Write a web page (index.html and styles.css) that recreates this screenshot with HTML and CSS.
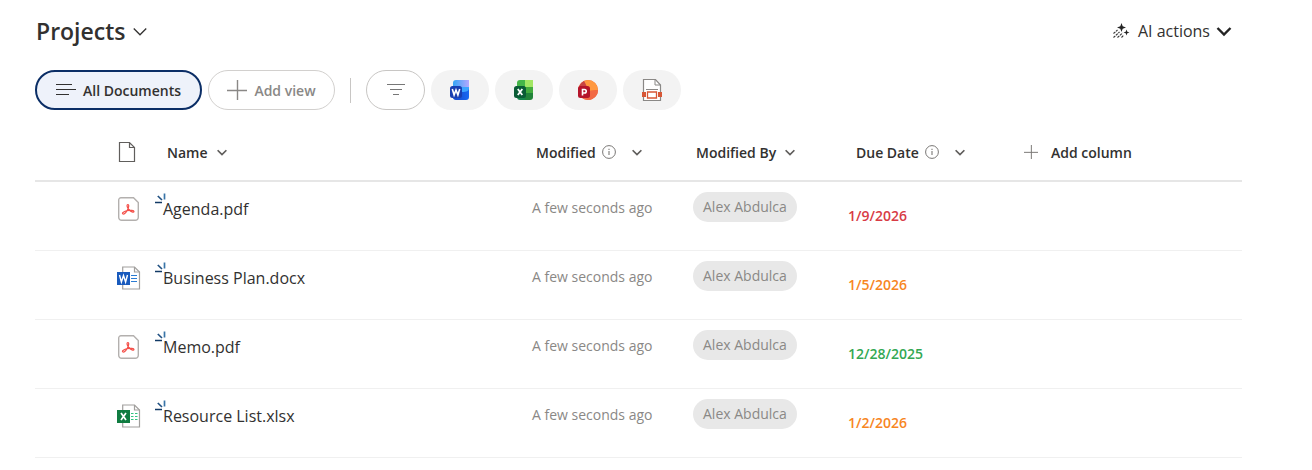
FILE: index.html
```
<!DOCTYPE html>
<html lang="en">
<head>
    <meta charset="UTF-8">
    <meta name="viewport" content="width=device-width, initial-scale=1.0">
    <title>Projects</title>
    <link rel="stylesheet" href="styles.css">
</head>
<body>
    <!-- shared icons -->
    <svg class="sprite" width="0" height="0" aria-hidden="true">
        <symbol id="chevron" viewBox="0 0 16 16"><path d="M3 6l5 5 5-5" fill="none" stroke="currentColor"/></symbol>
        <symbol id="info" viewBox="0 0 14 14">
            <circle cx="7" cy="7" r="6.4" fill="none" stroke="currentColor"/>
            <path d="M7 6v4M7 3.8v1.2" fill="none" stroke="currentColor" stroke-width="1.1"/>
        </symbol>
        <symbol id="plus" viewBox="0 0 20 20"><path d="M10.5 0v20M0 10.5h20" fill="none" stroke="currentColor" stroke-width="1.4"/></symbol>
        <symbol id="new" viewBox="0 0 12 12">
            <path d="M0 9.500h7" stroke="#123a66" stroke-width="1.500"/>
            <path d="M2.800 3l4.200 4" stroke="#205081" stroke-width="1.700"/>
            <path d="M9.500 .5v6" stroke="#3975a8" stroke-width="1.700"/>
        </symbol>
        <symbol id="pdf" viewBox="0 0 24 26">
            <path d="M4 1.700h12.500l4.800 4.800v14.800a3 3 0 0 1-3 3H4.700a3 3 0 0 1-3-3V4a2.300 2.300 0 0 1 2.300-2.300z" fill="#fff" stroke="#b3b0ae" stroke-width="1.400"/>
            <path d="M5.700 17.800c-1-.8 1.200-2.500 4.800-3.200 3.200-.6 6.500-.4 6.500.8 0 1.500-3.400.4-5.300-1.900-1.900-2.200-2.100-5-.8-5 1.500 0 .8 3.500-.9 6.300-1.400 2.500-3.100 3.800-4.300 3z" fill="none" stroke="#f4504a" stroke-width="1.200"/>
        </symbol>
        <symbol id="docx" viewBox="0 0 24 26">
            <path d="M5.700 2h11.800l5 5v17H5.700z" fill="#fff" stroke="#a19f9d" stroke-width="1.200"/>
            <path d="M17.500 2v5h5" fill="none" stroke="#a19f9d" stroke-width="1.200"/>
            <path d="M14 10.500h6M14 13.500h6M14 16.500h6" stroke="#2b7cd3" stroke-width="1.200"/>
            <path d="M0 7h13v13H0z" fill="#185abd"/>
            <path d="M2.500 10l1.900 7 2.100-6.500L8.600 17l1.900-7" fill="none" stroke="#fff" stroke-width="1.400"/>
        </symbol>
        <symbol id="xlsx" viewBox="0 0 24 26">
            <path d="M5.700 2h11.800l5 5v17H5.700z" fill="#fff" stroke="#a19f9d" stroke-width="1.200"/>
            <path d="M17.500 2v5h5" fill="none" stroke="#a19f9d" stroke-width="1.200"/>
            <path d="M14 10.500h2.500M18 10.500h2.500M14 13.500h2.500M18 13.500h2.500M14 16.500h2.500M18 16.500h2.500" stroke="#33c481" stroke-width="1.200"/>
            <path d="M0 7h13v13H0z" fill="#107c41"/>
            <path d="M4 10l5 7M9 10l-5 7" stroke="#fff" stroke-width="1.700"/>
        </symbol>
    </svg>

    <header class="page-header">
        <h1><button class="title-btn">Projects <svg width="20" height="20" aria-hidden="true"><use href="#chevron"/></svg></button></h1>
        <button class="ai-btn">
            <svg width="18" height="18" viewBox="0 0 18 18" aria-hidden="true">
                <path d="M9.500 1l1.200 3.300L14 5.500l-3.300 1.200L9.500 10 8.300 6.700 5 5.500l3.300-1.200zM14.500 7.500l.8 2.200 2.200.8-2.200.8-.8 2.200-.8-2.200-2.200-.8 2.200-.8z" fill="#242424"/>
                <path d="M1.500 11.500L5.500 8M1.500 15.500l6-5.500M5.500 15.500l5-4.500M9.500 15.500l2-2" stroke="#333" stroke-width="1.100" stroke-dasharray="2.500 .8" fill="none"/>
            </svg>
            AI actions
            <svg class="bold-chevron" width="20" height="20" viewBox="0 0 20 20" aria-hidden="true"><path d="M3.500 7l6.500 6.500L16.500 7" fill="none" stroke="#242424" stroke-width="2.400"/></svg>
        </button>
    </header>

    <nav class="views" aria-label="Views">
        <button class="pill view active">
            <svg width="20" height="20" viewBox="0 0 20 20" aria-hidden="true"><path d="M0 4.500h16M0 9.500h20M0 14.500h13" stroke="currentColor"/></svg>
            All Documents
        </button>
        <button class="pill view add"><svg width="20" height="20" aria-hidden="true"><use href="#plus"/></svg>Add view</button>
        <span class="divider"></span>
        <button class="pill filter" aria-label="Filter">
            <svg width="18" height="18" viewBox="0 0 18 18" aria-hidden="true"><path d="M0 3.500h18M3 8.500h12M6 13.500h6" stroke="#777"/></svg>
        </button>
        <button class="pill type" aria-label="Word">
            <svg width="20" height="22" viewBox="0 0 20 22" aria-hidden="true">
                <defs>
                    <linearGradient id="wordTop" x2="1"><stop stop-color="#35a5f5"/><stop offset="1" stop-color="#b4a8ff"/></linearGradient>
                    <linearGradient id="wordBottom" x2="1"><stop stop-color="#1443c5"/><stop offset="1" stop-color="#1769f4"/></linearGradient>
                </defs>
                <path d="M3 20V4a3 3 0 0 1 3-3h13v8z" fill="url(#wordTop)"/>
                <path d="M3 14c0-5 3-6 8-6h8v6H3z" fill="#3da4ff"/>
                <path d="M3 18c0-4 3-5 7-5 5 0 9 0 9-4v9a3 3 0 0 1-3 3H6a3 3 0 0 1-3-3z" fill="url(#wordBottom)"/>
                <rect y="7" width="12" height="12" rx="2.500" fill="#183eb0"/>
                <path d="M2.300 10l1.800 6L6 11l1.900 5 1.800-6" fill="none" stroke="#fff" stroke-width="1.600"/>
            </svg>
        </button>
        <button class="pill type" aria-label="Excel">
            <svg width="20" height="22" viewBox="0 0 20 22" aria-hidden="true">
                <path d="M3 14V4a3 3 0 0 1 3-3h5v13z" fill="#45b649"/>
                <path d="M11 1h8v7h-8z" fill="#a2e663"/>
                <path d="M11 8h8v6h-8z" fill="#43ab3e"/>
                <path d="M3 8h8v13H6a3 3 0 0 1-3-3z" fill="#16864c"/>
                <path d="M11 14h8v4a3 3 0 0 1-3 3h-5z" fill="#218339"/>
                <rect y="7" width="12" height="12" rx="2.500" fill="#0a5c36"/>
                <path d="M3.800 10l4.500 6M8.300 10l-4.500 6" stroke="#fff" stroke-width="1.800"/>
            </svg>
        </button>
        <button class="pill type" aria-label="PowerPoint">
            <svg width="20" height="22" viewBox="0 0 20 22" aria-hidden="true">
                <circle cx="10" cy="11" r="10" fill="#ed5c36"/>
                <path d="M10 1a10 10 0 0 1 10 10l-9 1-5-10z" fill="#ff983f"/>
                <path d="M6 2a10 10 0 0 0-5 8l10 2z" fill="#c84444"/>
                <path d="M20 11a10 10 0 0 1-16 8l7-7z" fill="#f26a45"/>
                <rect y="7" width="12" height="12" rx="2.500" fill="#b5152b"/>
                <path d="M4.500 16.500v-6h2a1.700 1.700 0 0 1 0 3.500h-2" fill="none" stroke="#fff" stroke-width="1.600"/>
            </svg>
        </button>
        <button class="pill type" aria-label="PDF">
            <svg width="20" height="24" viewBox="0 0 20 24" aria-hidden="true">
                <path d="M1.500 1.500h12L18.500 7v15.500h-17z" fill="#fff" stroke="#8a8886" stroke-width="1.200"/>
                <path d="M13 1.500V7h5.500M4 11.500h12" fill="none" stroke="#8a8886"/>
                <path d="M0 14h4v5H0zM16 14h4v5h-4z" fill="#d75635"/>
                <path d="M5.500 14h9v6h-9z" fill="#fff" stroke="#d75635" stroke-width="1.300"/>
            </svg>
        </button>
    </nav>

    <table class="files">
        <colgroup>
            <col class="col-type"><col><col class="col-mid"><col class="col-mid"><col class="col-due"><col class="col-add">
        </colgroup>
        <thead>
            <tr>
                <th class="type-cell">
                    <svg width="20" height="22" viewBox="0 0 20 22" aria-label="File type"><path d="M2.500 1.500h10l5 5v14h-15zM12.500 1.500v5h5" fill="none" stroke="#605e5c" stroke-width="1.200"/></svg>
                </th>
                <th><button class="head-btn">Name <svg class="chev" width="14" height="14"><use href="#chevron"/></svg></button></th>
                <th><button class="head-btn">Modified <svg class="info" width="14" height="14"><use href="#info"/></svg><svg class="chev" width="14" height="14"><use href="#chevron"/></svg></button></th>
                <th><button class="head-btn">Modified By <svg class="chev" width="14" height="14"><use href="#chevron"/></svg></button></th>
                <th><button class="head-btn">Due Date <svg class="info" width="14" height="14"><use href="#info"/></svg><svg class="chev" width="14" height="14"><use href="#chevron"/></svg></button></th>
                <th><button class="head-btn add-col"><svg width="14" height="14"><use href="#plus"/></svg>Add column</button></th>
            </tr>
        </thead>
        <tbody>
            <tr>
                <td class="type-cell"><svg width="24" height="26"><use href="#pdf"/></svg></td>
                <td class="name"><svg class="new" width="12" height="12"><use href="#new"/></svg><a href="#">Agenda.pdf</a></td>
                <td class="modified">A few seconds ago</td>
                <td class="person"><span>Alex Abdulca</span></td>
                <td class="due red">1/9/2026</td>
                <td></td>
            </tr>
            <tr>
                <td class="type-cell"><svg width="24" height="26"><use href="#docx"/></svg></td>
                <td class="name"><svg class="new" width="12" height="12"><use href="#new"/></svg><a href="#">Business Plan.docx</a></td>
                <td class="modified">A few seconds ago</td>
                <td class="person"><span>Alex Abdulca</span></td>
                <td class="due orange">1/5/2026</td>
                <td></td>
            </tr>
            <tr>
                <td class="type-cell"><svg width="24" height="26"><use href="#pdf"/></svg></td>
                <td class="name"><svg class="new" width="12" height="12"><use href="#new"/></svg><a href="#">Memo.pdf</a></td>
                <td class="modified">A few seconds ago</td>
                <td class="person"><span>Alex Abdulca</span></td>
                <td class="due green">12/28/2025</td>
                <td></td>
            </tr>
            <tr>
                <td class="type-cell"><svg width="24" height="26"><use href="#xlsx"/></svg></td>
                <td class="name"><svg class="new" width="12" height="12"><use href="#new"/></svg><a href="#">Resource List.xlsx</a></td>
                <td class="modified">A few seconds ago</td>
                <td class="person"><span>Alex Abdulca</span></td>
                <td class="due orange">1/2/2026</td>
                <td></td>
            </tr>
        </tbody>
    </table>
</body>
</html>
```
FILE: styles.css
```
* {
    box-sizing: border-box;
}
body {
    margin: 0;
    padding: 11px 70px 0 35px;
    font-family: "Open Sans", "Noto Sans", sans-serif;
    font-size: 14px;
    color: #323130;
    background: #fff;
}
.sprite {
    position: absolute;
}
svg {
    flex-shrink: 0;
}
button {
    display: flex;
    align-items: center;
    padding: 0;
    border: none;
    background: none;
    color: inherit;
    font: inherit;
    cursor: pointer;
}
.page-header {
    display: flex;
    justify-content: space-between;
    align-items: center;
    height: 40px;
    padding: 0 8px 0 1px;
}
h1 {
    margin: 0;
    font-size: 23px;
    font-weight: 600;
}
.title-btn {
    gap: 5px;
}
.ai-btn {
    gap: 8px;
    font-size: 16px;
}
.bold-chevron {
    margin-left: -4px;
}
.views {
    display: flex;
    align-items: center;
    gap: 6px;
    margin-top: 19px;
}
.pill {
    justify-content: center;
    height: 40px;
    border-radius: 20px;
}
.view {
    gap: 7px;
    font-weight: 600;
}
.active {
    width: 167px;
    border: 2px solid #0b2e66;
    background: #eef2fa;
}
.add {
    width: 127px;
    border: 1px solid #d2d0ce;
    color: #8a8886;
}
.divider {
    width: 1px;
    height: 25px;
    margin: 0 9px;
    background: #c8c6c4;
}
.filter {
    width: 59px;
    border: 1px solid #c8c6c4;
}
.type {
    width: 58px;
    background: #f3f3f3;
}
.files {
    width: 100%;
    margin-top: 14px;
    border-collapse: separate;
    border-spacing: 0;
    table-layout: fixed;
}
.col-type {
    width: 120px;
}
.col-mid {
    width: 160px;
}
.col-due {
    width: 168px;
}
.col-add {
    width: 230px;
}
th {
    height: 58px;
    padding: 0 0 0 12px;
    border-bottom: 2px solid #e6e6e6;
    text-align: left;
    font-size: 14px;
    font-weight: 600;
}
.head-btn .info {
    margin-left: 6px;
    color: #797775;
}
.head-btn .chev {
    margin-left: 7px;
    color: #605e5c;
    stroke-width: 2;
}
.head-btn .info + .chev {
    margin-left: 14px;
}
.add-col {
    gap: 13px;
}
.add-col svg {
    color: #797775;
}
td {
    height: 69px;
    padding: 14px 0 0;
    border-bottom: 1px solid #f0f0f0;
    vertical-align: top;
}
.type-cell {
    padding-left: 82px;
}
.type-cell svg {
    display: block;
}
.name {
    position: relative;
    padding-left: 8px;
    font-size: 16px;
    line-height: 26px;
}
.name a {
    color: inherit;
    text-decoration: none;
}
/* marker for recently added files */
.new {
    position: absolute;
    left: 0;
    top: 11px;
}
.modified {
    padding-left: 8px;
    line-height: 24px;
    color: #8a8886;
}
.person {
    padding: 10px 0 0 9px;
}
.person span {
    display: inline-block;
    padding: 0 10px;
    border-radius: 15px;
    background: #e8e8e8;
    color: #8a8886;
    line-height: 30px;
}
.due {
    padding: 0 0 2px 4px;
    vertical-align: middle;
    font-weight: 600;
}
.red {
    color: #d83b45;
}
.orange {
    color: #f7861f;
}
.green {
    color: #33a853;
}
```
